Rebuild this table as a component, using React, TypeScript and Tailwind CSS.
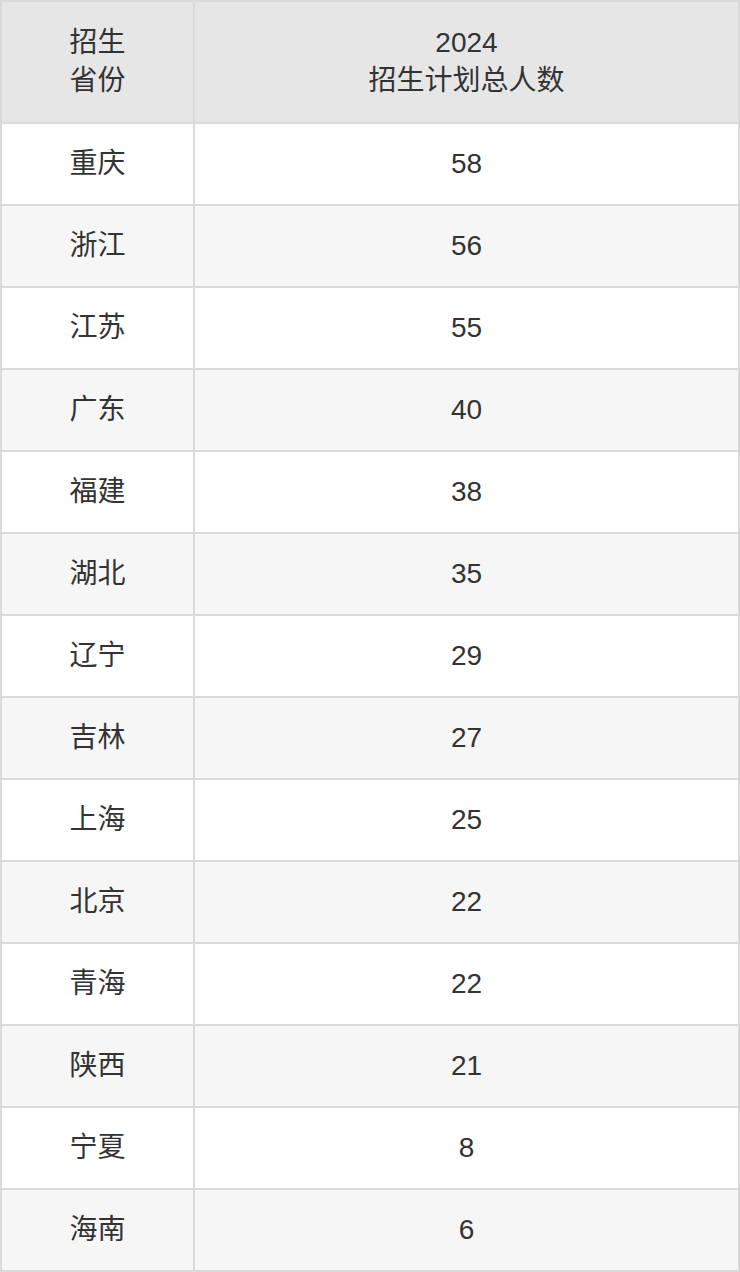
const rows: [string, string][] = [
  ['重庆', '58'],
  ['浙江', '56'],
  ['江苏', '55'],
  ['广东', '40'],
  ['福建', '38'],
  ['湖北', '35'],
  ['辽宁', '29'],
  ['吉林', '27'],
  ['上海', '25'],
  ['北京', '22'],
  ['青海', '22'],
  ['陕西', '21'],
  ['宁夏', '8'],
  ['海南', '6'],
];

export default function App() {
  return (
    <div className="w-[740px] bg-white font-['Liberation_Sans','Noto_Sans_CJK_SC',sans-serif] text-[28px] leading-[38px] text-[#333333]">
      <table className="w-[740px] table-fixed border-separate border-spacing-0 border-t-2 border-l-2 border-[#dadada]">
        <colgroup>
          <col className="w-[193px]" />
          <col />
        </colgroup>
        <thead>
          <tr className="h-[122px] bg-[#e6e6e6]">
            <th className="border-r-2 border-b-2 border-[#dadada] text-center align-middle font-normal">
              招生
              <br />
              省份
            </th>
            <th className="border-r-2 border-b-2 border-[#dadada] text-center align-middle font-normal">
              2024
              <br />
              招生计划总人数
            </th>
          </tr>
        </thead>
        <tbody>
          {rows.map(([province, count], i) => (
            <tr key={province + i} className={i % 2 === 0 ? 'h-[82px] bg-white' : 'h-[82px] bg-[#f6f6f6]'}>
              <td className="border-r-2 border-b-2 border-[#dadada] text-center align-middle">{province}</td>
              <td className="border-r-2 border-b-2 border-[#dadada] text-center align-middle">{count}</td>
            </tr>
          ))}
        </tbody>
      </table>
    </div>
  );
}
